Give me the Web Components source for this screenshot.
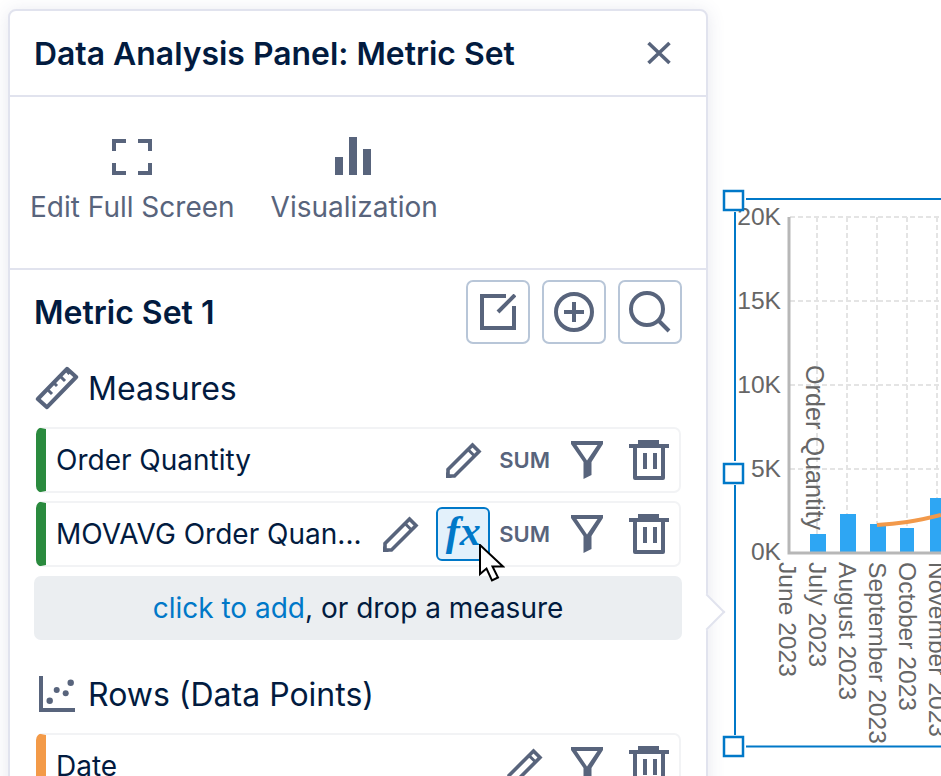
<!DOCTYPE html>
<html>
<head>
<meta charset="utf-8">
<title>Data Analysis Panel</title>
<style>
    html, body { margin: 0; height: 776px; overflow: hidden; background: #fff; }
    body { position: relative; font-family: Inter, "Noto Sans", sans-serif; color: #021b3f; }
    canvas-page { display: block; }
</style>
</head>
<body>
<canvas-page>
    <analysis-panel caption="Data Analysis Panel: Metric Set">
        <panel-tool slot="tools" icon="fullscreen" label="Edit Full Screen"></panel-tool>
        <panel-tool slot="tools" icon="bars" label="Visualization"></panel-tool>
        <metric-head slot="body" caption="Metric Set 1"></metric-head>
        <section-title slot="body" icon="ruler" caption="Measures"></section-title>
        <field-row slot="body" color="#2a8a3e" caption="Order Quantity" agg="SUM"></field-row>
        <field-row slot="body" color="#2a8a3e" caption="MOVAVG Order Quan..." agg="SUM" fx></field-row>
        <add-row slot="body" what="measure"></add-row>
        <section-title slot="body" class="next" icon="scatter" caption="Rows (Data Points)"></section-title>
        <field-row slot="body" color="#f39a48" caption="Date"></field-row>
    </analysis-panel>
    <chart-widget></chart-widget>
</canvas-page>

<script>
    const ICONS = {
        close: [26, 26, '<path d="M2.500 3L23.500 23M23.500 3L2.500 23" fill="none" stroke="currentColor" stroke-width="3.600"/>'],
        fullscreen: [40, 36, '<path d="M2 12V2H14M26 2H38V12M38 24V34H26M14 34H2V24" fill="none" stroke="currentColor" stroke-width="4"/>'],
        bars: [38, 38, '<path d="M0 20H8V38H0ZM14 0H22V38H14ZM28 12H36V38H28Z" fill="currentColor"/>'],
        edit: [36, 36, '<path d="M26 2H2V34H34V12" fill="none" stroke="currentColor" stroke-width="4"/><path d="M18 18L35 1" fill="none" stroke="currentColor" stroke-width="4"/>'],
        add: [40, 40, '<circle cx="20" cy="20" r="18" fill="none" stroke="currentColor" stroke-width="4"/><path d="M10 20H30M20 10V30" fill="none" stroke="currentColor" stroke-width="4"/>'],
        search: [42, 42, '<circle cx="18" cy="18" r="16" fill="none" stroke="currentColor" stroke-width="4"/><path d="M29 29L40 40" fill="none" stroke="currentColor" stroke-width="4"/>'],
        ruler: [44, 44, '<path d="M2.800 33L32 2.800L41.200 11L12 41.200Z" fill="none" stroke="currentColor" stroke-width="4" stroke-linejoin="round"/><path d="M12 23L17 28M18.500 16.500L22 20M25 10L30 15M31 4L34.500 8" fill="none" stroke="currentColor" stroke-width="3"/>'],
        scatter: [36, 36, '<path d="M2 0V34H36" fill="none" stroke="currentColor" stroke-width="4"/><circle cx="10.700" cy="24.700" r="3.200" fill="currentColor"/><circle cx="17.700" cy="14" r="3" fill="currentColor"/><circle cx="26.700" cy="17.300" r="3" fill="currentColor"/><circle cx="31.700" cy="6.700" r="3.200" fill="currentColor"/>'],
        pencil: [36, 36, '<path d="M2 34V27.500L26.500 3L33 9.500L8.500 34Z" fill="none" stroke="currentColor" stroke-width="3.600"/><path d="M22 7.500L28.500 14" fill="none" stroke="currentColor" stroke-width="3"/><path d="M0 36V30L6 36Z" fill="currentColor"/>'],
        funnel: [32, 38, '<path fill-rule="evenodd" d="M0 0H32V3L20.500 21V34L12.500 38V21L0 3ZM5.500 4L16 19.500L26.500 4Z" fill="currentColor"/>'],
        trash: [40, 40, '<path d="M9 0H30V4H40V8H0V4H9Z" fill="currentColor"/><path d="M6 8V38H34V8" fill="none" stroke="currentColor" stroke-width="4" stroke-linejoin="round"/><path d="M14 13H18V29H14ZM24 13H28V29H24Z" fill="currentColor"/>']
    };

    class UiIcon extends HTMLElement {
        constructor() {
            super();
            const [w, h, body] = ICONS[this.getAttribute('name')];
            this.attachShadow({mode: 'open'}).innerHTML = `
                <style>
                    :host { display: block; flex: none; width: ${w}px; height: ${h}px; color: #58647c; }
                    svg { display: block; }
                </style>
                <svg width="${w}" height="${h}" viewBox="0 0 ${w} ${h}">${body}</svg>`;
        }
    }
    customElements.define('ui-icon', UiIcon);

    class AnalysisPanel extends HTMLElement {
        constructor() {
            super();
            this.attachShadow({mode: 'open'}).innerHTML = `
                <style>
                    :host {
                        display: block;
                        position: relative;
                        box-sizing: border-box;
                        width: 700px;
                        height: 900px;
                        margin: 9px 0 0 8px;
                        background: #fff;
                        border: 2px solid #e1e3ee;
                        border-radius: 8px;
                        box-shadow: 0 2px 18px rgba(60, 66, 120, .13);
                    }
                    header {
                        display: flex;
                        align-items: center;
                        justify-content: space-between;
                        height: 84px;
                        padding: 0 34px 0 24px;
                        border-bottom: 2px solid #e1e3ee;
                    }
                    h1 { margin: 0; font-size: 31.900px; font-weight: 600; color: #021b3f; }
                    .tools {
                        display: flex;
                        gap: 36px;
                        height: 171px;
                        padding-left: 20px;
                        border-bottom: 2px solid #e1e3ee;
                    }
                    .body { padding: 0 24px; }
                    .tip {
                        position: absolute;
                        left: 684px;
                        top: 588px;
                        width: 26px;
                        height: 26px;
                        box-sizing: border-box;
                        background: #fff;
                        border: solid #e1e3ee;
                        border-width: 2px 2px 0 0;
                        transform: rotate(45deg);
                    }
                </style>
                <header><h1></h1><ui-icon name="close"></ui-icon></header>
                <div class="tools"><slot name="tools"></slot></div>
                <div class="body"><slot name="body"></slot></div>
                <div class="tip"></div>`;
            this.shadowRoot.querySelector('h1').textContent = this.getAttribute('caption');
        }
    }
    customElements.define('analysis-panel', AnalysisPanel);

    class PanelTool extends HTMLElement {
        constructor() {
            super();
            this.attachShadow({mode: 'open'}).innerHTML = `
                <style>
                    :host {
                        display: flex;
                        flex-direction: column;
                        align-items: center;
                        padding-top: 40px;
                        color: #58647c;
                        font-size: 28px;
                    }
                    .ico { height: 38px; display: flex; align-items: flex-end; }
                    span { margin-top: 15px; white-space: nowrap; }
                </style>
                <div class="ico"><ui-icon name="${this.getAttribute('icon')}"></ui-icon></div>
                <span>${this.getAttribute('label')}</span>`;
        }
    }
    customElements.define('panel-tool', PanelTool);

    class MetricHead extends HTMLElement {
        constructor() {
            super();
            this.attachShadow({mode: 'open'}).innerHTML = `
                <style>
                    :host {
                        display: flex;
                        align-items: center;
                        gap: 12px;
                        padding-top: 10px;
                    }
                    h2 { flex: 1; margin: 0; font-size: 32px; font-weight: 600; color: #021b3f; }
                    button {
                        display: flex;
                        align-items: center;
                        justify-content: center;
                        box-sizing: border-box;
                        width: 64px;
                        height: 64px;
                        padding: 0;
                        background: #fff;
                        border: 2px solid #b8c6d8;
                        border-radius: 7px;
                    }
                </style>
                <h2>${this.getAttribute('caption')}</h2>
                <button><ui-icon name="edit"></ui-icon></button>
                <button><ui-icon name="add"></ui-icon></button>
                <button><ui-icon name="search"></ui-icon></button>`;
        }
    }
    customElements.define('metric-head', MetricHead);

    class SectionTitle extends HTMLElement {
        constructor() {
            super();
            this.attachShadow({mode: 'open'}).innerHTML = `
                <style>
                    :host {
                        display: flex;
                        align-items: center;
                        height: 44px;
                        margin: 22px 0 17px 0;
                        font-size: 32px;
                        color: #021b3f;
                    }
                    :host(.next) { margin-top: 32px; }
                    .ico { width: 55px; display: flex; justify-content: center; padding-right: 7px; box-sizing: border-box; margin-left: -1px; }
                </style>
                <div class="ico"><ui-icon name="${this.getAttribute('icon')}"></ui-icon></div>
                <span>${this.getAttribute('caption')}</span>`;
        }
    }
    customElements.define('section-title', SectionTitle);

    class FieldRow extends HTMLElement {
        constructor() {
            super();
            const agg = this.getAttribute('agg');
            const fx = this.hasAttribute('fx');
            this.attachShadow({mode: 'open'}).innerHTML = `
                <style>
                    :host {
                        display: flex;
                        align-items: center;
                        box-sizing: border-box;
                        height: 66px;
                        margin: 0 1px 8px 2px;
                        padding-right: 10px;
                        background: #fff;
                        border: 2px solid #f2f3f5;
                        border-left: 10px solid ${this.getAttribute('color')};
                        border-radius: 7px;
                        font-size: 28px;
                        color: #021b3f;
                    }
                    .name { flex: 1; margin-left: 10px; white-space: nowrap; }
                    b { font-size: 22px; font-weight: 600; color: #58647c; margin: 0 21px 0 ${fx ? 9 : 17}px; }
                    .filter { margin-right: 26px; }
                    .plain { margin-left: 28px; }
                    .fx {
                        position: relative;
                        box-sizing: border-box;
                        width: 54px;
                        height: 54px;
                        margin-left: 17px;
                        background: #e3f1fb;
                        border: 2px solid #0078c8;
                        border-radius: 6px;
                        color: #0078c8;
                        font: italic bold 42px/45px "Liberation Serif", serif;
                        text-align: center;
                    }
                    svg { position: absolute; left: 41px; top: 35px; }
                </style>
                <span class="name">${this.getAttribute('caption')}</span>
                <ui-icon name="pencil"></ui-icon>
                ${fx ? `<div class="fx">fx<svg width="26" height="38" viewBox="0 0 26 38"><path d="M1 1V30L7.500 24.500L13 36.500L19 33.500L13.500 22.500H24Z" fill="#fff" stroke="#000" stroke-width="2"/></svg></div>` : ''}
                ${agg ? `<b>${agg}</b>` : ''}
                <ui-icon name="funnel" class="filter ${agg ? '' : 'plain'}"></ui-icon>
                <ui-icon name="trash"></ui-icon>`;
        }
    }
    customElements.define('field-row', FieldRow);

    class AddRow extends HTMLElement {
        constructor() {
            super();
            this.attachShadow({mode: 'open'}).innerHTML = `
                <style>
                    :host {
                        display: flex;
                        align-items: center;
                        justify-content: center;
                        height: 64px;
                        margin-top: 9px;
                        background: #ebeef1;
                        border-radius: 7px;
                        font-size: 28px;
                        color: #021b3f;
                        white-space: pre;
                    }
                    a { color: #0078c8; text-decoration: none; }
                </style>
                <a href="#">click to add</a>, or drop a ${this.getAttribute('what')}`;
        }
    }
    customElements.define('add-row', AddRow);

    class ChartWidget extends HTMLElement {
        constructor() {
            super();
            const yLabels = [[225, '20K'], [309, '15K'], [393, '10K'], [477, '5K'], [560, '0K']];
            const xLabels = [[779, 'June 2023'], [809, 'July 2023'], [839, 'August 2023'], [869, 'September 2023'], [899, 'October 2023'], [929, 'November 2023']];
            const bars = [[810, 16, 534], [840, 16, 514], [870, 16, 524], [900, 14, 528], [930, 16, 498]];
            const grid = [217, 301, 385, 469].map(y => `<path d="M790 ${y}H941"/>`).join('')
                + [817, 847, 877, 907, 937].map(x => `<path d="M${x} 217V553"/>`).join('');
            const handle = (x, y) => `<rect x="${x}" y="${y}" width="19" height="19" fill="#fff" stroke="#0078c8" stroke-width="2.500"/>`;
            this.attachShadow({mode: 'open'}).innerHTML = `
                <style>
                    :host { position: absolute; left: 0; top: 0; width: 941px; height: 776px; pointer-events: none; }
                    svg { display: block; }
                    text { font: 24.600px "Liberation Sans", Arial, sans-serif; fill: #666; }
                    .title { font-size: 25.200px; }
                </style>
                <svg width="941" height="776" viewBox="0 0 941 776">
                    <g fill="none" stroke="#e4e4e4" stroke-width="2" stroke-dasharray="5 3">${grid}</g>
                    ${bars.map(([x, w, y]) => `<rect x="${x}" y="${y}" width="${w}" height="${553 - y}" fill="#2ea6f3"/>`).join('')}
                    <path d="M877 525Q893 524 907 522T941 515" fill="none" stroke="#f2994a" stroke-width="4"/>
                    <path d="M789 217V553H941" fill="none" stroke="#b7b7b7" stroke-width="3"/>
                    ${yLabels.map(([y, t]) => `<text x="781" y="${y}" text-anchor="end">${t}</text>`).join('')}
                    <text class="title" transform="translate(806 365) rotate(90)">Order Quantity</text>
                    ${xLabels.map(([x, t]) => `<text transform="translate(${x} 562) rotate(90)">${t}</text>`).join('')}
                    <path d="M746 199H941M746 746.500H941M735 212V461M735 485V735" fill="none" stroke="#0078c8" stroke-width="2"/>
                    ${handle(724, 191)}${handle(724, 464)}${handle(724, 737)}
                </svg>`;
        }
    }
    customElements.define('chart-widget', ChartWidget);
</script>
</body>
</html>
